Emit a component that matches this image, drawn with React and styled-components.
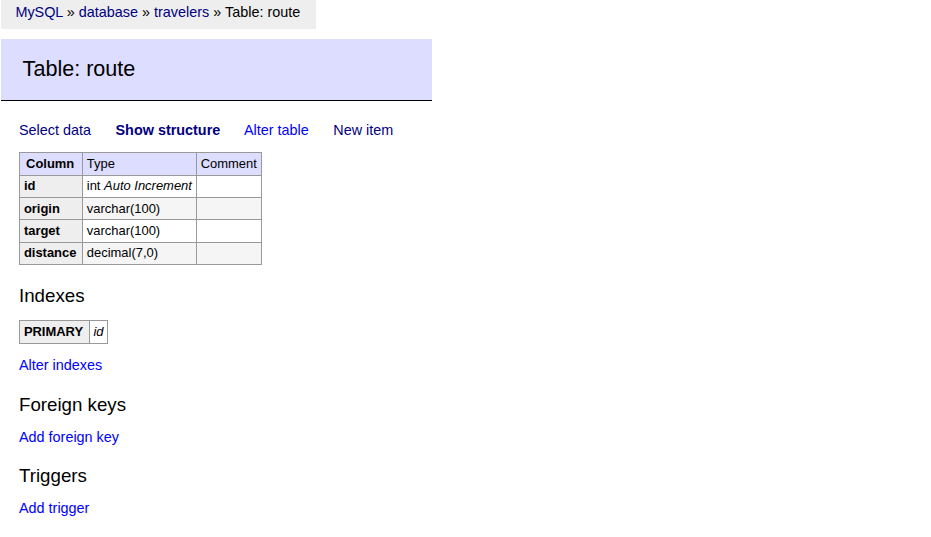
import React from 'react';
import styled, { createGlobalStyle } from 'styled-components';

const GlobalStyle = createGlobalStyle`
  html, body {
    margin: 0;
    padding: 0;
    background: #fff;
  }
  body {
    font: 90%/1.25 "Liberation Sans", Arial, Helvetica, sans-serif;
    color: #000;
  }
`;

const fields = [
  { name: 'id', type: 'int', extra: 'Auto Increment' },
  { name: 'origin', type: 'varchar(100)' },
  { name: 'target', type: 'varchar(100)' },
  { name: 'distance', type: 'decimal(7,0)' },
];

const Page = styled.div`
  padding-bottom: 20px;
`;

const Breadcrumb = styled.p`
  display: inline-block;
  white-space: nowrap;
  margin: 0 0 0 1px;
  height: 2em;
  line-height: 1.8em;
  padding: 0 16px 0 1em;
  background: #eee;
`;

const Link = styled.a`
  color: ${(p) => (p.$visited ? 'navy' : 'blue')};
  text-decoration: none;
  font-weight: ${(p) => (p.$current ? 'bold' : 'normal')};
`;

const Content = styled.div`
  padding-left: 19px;
`;

const Title = styled.h2`
  width: 431px;
  box-sizing: border-box;
  font-size: 150%;
  font-weight: normal;
  line-height: 1.25;
  margin: 10px 0 20px -18px;
  padding: 0.8em 1em;
  border-bottom: 1px solid #000;
  background: #ddf;
  color: #000;
`;

const Links = styled.p`
  margin: 0.8em 20px 0 0;
  a {
    margin-right: 20.5px;
  }
`;

const Para = styled.p`
  margin: 0.8em 20px 0 0;
`;

const Heading = styled.h3`
  font-size: 130%;
  font-weight: normal;
  line-height: 1.25;
  margin: 1em 0 0;
`;

const Table = styled.table`
  margin: 1em 20px 0 0;
  border-collapse: collapse;
  font-size: 90%;
  line-height: 1.25;
  th, td {
    padding: ${(p) => (p.$tall ? '0.24em' : '0.2em')} 0.3em;
  }
`;

const Th = styled.th`
  border: 1px solid #999;
  text-align: ${(p) => (p.$center ? 'center' : 'left')};
  background: ${(p) => (p.$head ? '#ddf' : '#eee')};
  font-weight: bold;
  && {
    padding-right: 0.42em;
  }
`;

const Td = styled.td`
  border: 1px solid #999;
  background: ${(p) => (p.$head ? '#ddf' : p.$odd ? '#f5f5f5' : '#fff')};
  font-style: ${(p) => (p.$italic ? 'italic' : 'normal')};
  vertical-align: top;
`;

export default function App() {
  return (
    <Page>
      <GlobalStyle />
      <Breadcrumb>
        <Link href="#" $visited>MySQL</Link> » <Link href="#" $visited>database</Link> »{' '}
        <Link href="#" $visited>travelers</Link> » Table: route
      </Breadcrumb>
      <Content>
        <Title>Table: route</Title>
        <Links>
          <Link href="#" $visited>Select data</Link>{' '}
          <Link href="#" $visited $current>Show structure</Link>{' '}
          <Link href="#">Alter table</Link>{' '}
          <Link href="#" $visited>New item</Link>
        </Links>
        <Table>
          <thead>
            <tr>
              <Th $head $center>Column</Th>
              <Td $head>Type</Td>
              <Td $head>Comment</Td>
            </tr>
          </thead>
          <tbody>
            {fields.map((f, i) => (
              <tr key={f.name}>
                <Th>{f.name}</Th>
                <Td $odd={i % 2 === 1}>
                  {f.type}
                  {f.extra && <> <i>{f.extra}</i></>}
                </Td>
                <Td $odd={i % 2 === 1}></Td>
              </tr>
            ))}
          </tbody>
        </Table>
        <Heading>Indexes</Heading>
        <Table $tall>
          <tbody>
            <tr>
              <Th>PRIMARY</Th>
              <Td $italic>id</Td>
            </tr>
          </tbody>
        </Table>
        <Para>
          <Link href="#">Alter indexes</Link>
        </Para>
        <Heading>Foreign keys</Heading>
        <Para>
          <Link href="#">Add foreign key</Link>
        </Para>
        <Heading>Triggers</Heading>
        <Para>
          <Link href="#">Add trigger</Link>
        </Para>
      </Content>
    </Page>
  );
}
